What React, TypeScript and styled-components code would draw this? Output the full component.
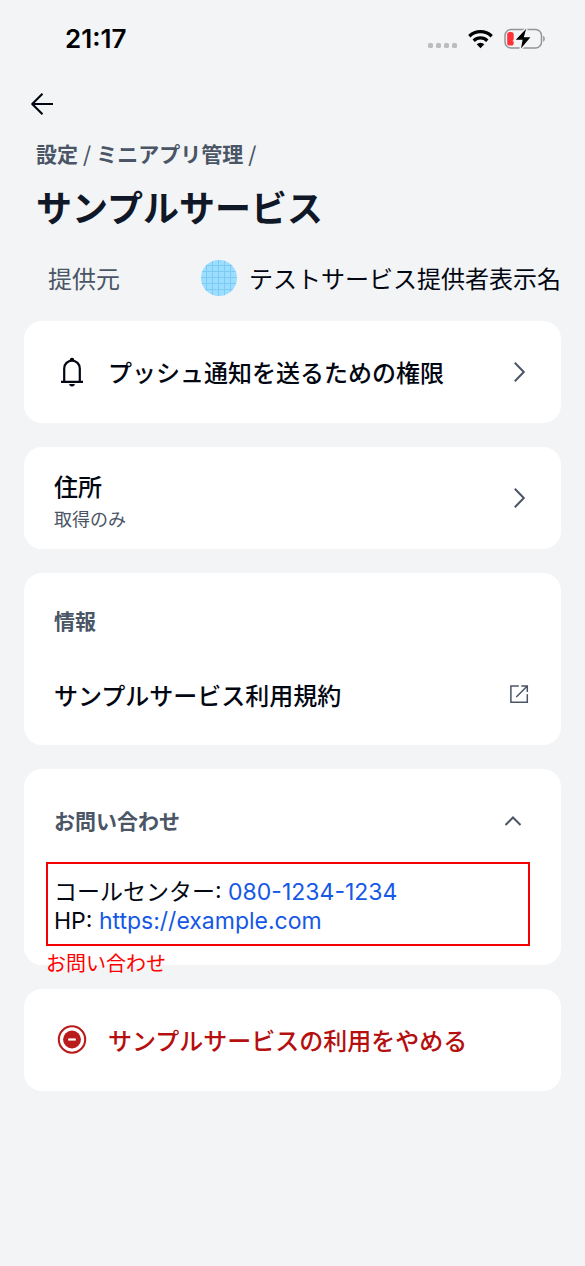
import React, { useState } from "react";
import styled, { createGlobalStyle } from "styled-components";

const ink = "#030712";
const muted = "#4a5565";
const danger = "#b91c1c";
const dangerText = "#b50f0f";
const latinFirst = `Inter, "Noto Sans CJK JP", sans-serif`;

const GlobalStyle = createGlobalStyle`
  * { box-sizing: border-box; }
  body {
    margin: 0;
    background: #f3f4f6;
    color: ${ink};
    font-family: "Noto Sans CJK JP", sans-serif;
    font-size: 24px;
    line-height: 36px;
  }
  h1, h2, p, dl, dd { margin: 0; }
  button { font: inherit; color: inherit; background: none; border: 0; padding: 0; cursor: pointer; text-align: left; }
  a { text-decoration: none; color: inherit; }
  svg { display: block; flex: none; }
`;

const Page = styled.div`
  min-height: 100vh;
  padding-bottom: 40px;
`;

const StatusBar = styled.div`
  display: flex;
  align-items: center;
  justify-content: space-between;
  height: 78px;
  padding: 0 39px 0 65px;
  color: #000;
`;

const Clock = styled.time`
  font-family: ${latinFirst};
  font-size: 26px;
  font-weight: 600;
`;

const StatusIcons = styled.div`
  display: flex;
  align-items: center;
  gap: 11px;
`;

const NavBar = styled.nav`
  display: flex;
  align-items: center;
  height: 52px;
  padding: 0 24px;
`;

const BackButton = styled.button`
  width: 36px;
  height: 36px;
`;

const Header = styled.header`
  padding: 8px 36px 0;
`;

const Breadcrumb = styled.nav`
  display: flex;
  gap: 5px;
  font-size: 21px;
  font-weight: 700;
  line-height: 30px;
  color: ${muted};
`;

const Slash = styled.span`
  font-weight: 500;
`;

const Title = styled.h1`
  margin-top: 14px;
  font-size: 36px;
  font-weight: 700;
  line-height: 48px;
  color: #101828;
`;

const Provider = styled.dl`
  display: flex;
  align-items: center;
  justify-content: space-between;
  padding: 30px 24px 25px 48px;
  white-space: nowrap;
`;

const ProviderLabel = styled.dt`
  color: ${muted};
`;

const ProviderName = styled.dd`
  display: flex;
  align-items: center;
  gap: 12px;
`;

const Cards = styled.main`
  display: flex;
  flex-direction: column;
  gap: 24px;
  padding: 0 24px;
`;

const Card = styled.section<{ $top?: number; $bottom?: number; $gap?: number }>`
  position: relative;
  display: flex;
  flex-direction: column;
  gap: ${(p) => p.$gap ?? 0}px;
  padding: ${(p) => p.$top ?? 0}px 24px ${(p) => p.$bottom ?? 0}px 30px;
  border-radius: 18px;
  background: #fff;
`;

const CardButton = styled.button<{ $danger?: boolean }>`
  display: flex;
  align-items: center;
  gap: 18px;
  min-height: 102px;
  padding: 0 24px 0 30px;
  border-radius: 18px;
  background: #fff;
  font-weight: 500;
  color: ${(p) => (p.$danger ? dangerText : ink)};
`;

const Grow = styled.span`
  flex: 1;
`;

const Stacked = styled(Grow)`
  padding-top: 4px;
`;

const Note = styled.small`
  display: block;
  font-size: 18px;
  font-weight: 400;
  line-height: 28px;
  color: ${muted};
`;

const Heading = styled.h2`
  font-size: 21px;
  font-weight: 700;
  line-height: 30px;
  color: ${muted};
`;

const RowLink = styled.a`
  display: flex;
  align-items: center;
  justify-content: space-between;
  font-weight: 500;
`;

const Toggle = styled.button`
  display: flex;
  align-items: center;
  justify-content: space-between;
  width: 100%;
  padding-right: 6px;
`;

const ContactLines = styled.div`
  font-family: ${latinFirst};
  font-size: 23px;
  line-height: 29px;
`;

const ContactLink = styled.a`
  color: #1558e6;
`;

const Callout = styled.div`
  position: absolute;
  top: 93px;
  left: 22px;
  right: 31px;
  height: 84px;
  border: 2px solid #f40000;
  pointer-events: none;
`;

const CalloutLabel = styled.span`
  position: absolute;
  top: 84px;
  left: -2px;
  font-size: 20px;
  line-height: 30px;
  color: #ff0000;
`;

const SignalIcon = () => (
  <svg width="30" height="26" viewBox="0 0 30 26" fill="#bcbdc0">
    {[1, 9, 17, 25].map((x) => (
      <rect key={x} x={x} y="17" width="5" height="5" rx="1.5" />
    ))}
  </svg>
);

const WifiIcon = () => (
  <svg width="25" height="20" viewBox="0 0 25 20" fill="none" stroke="#000" strokeWidth="3.3">
    <path d="M1.3 7.2a16 16 0 0 1 22.4 0" />
    <path d="M5.7 11.7a9.8 9.8 0 0 1 13.6 0" />
    <path d="M12.5 19.2 8.7 15.3a5.4 5.4 0 0 1 7.6 0Z" fill="#000" stroke="none" />
  </svg>
);

const BatteryIcon = () => (
  <svg width="42" height="22" viewBox="0 0 42 22">
    <rect x="1" y="1.5" width="36.5" height="18.5" rx="6" fill="none" stroke="#939496" strokeWidth="1.5" />
    <path d="M39.2 7.8c2.1 1 2.1 5 0 6Z" fill="#939496" />
    <rect x="3.2" y="4" width="6.5" height="13.5" rx="2.6" fill="#ff3238" />
    <path d="M22.2.8 11.8 11.8h6.8L17 20.6 26.4 9.2h-6.6Z" fill="#000" stroke="#f3f4f6" strokeWidth="3" paintOrder="stroke" />
  </svg>
);

const ArrowLeftIcon = () => (
  <svg width="36" height="36" viewBox="0 0 36 36" fill="none" stroke={ink} strokeWidth="2.1" strokeLinejoin="round">
    <path d="M29 18H8M18.5 7.7 8.2 18l10.3 10.3" />
  </svg>
);

const GlobeAvatar = () => (
  <svg width="36" height="36" viewBox="0 0 36 36">
    <defs>
      <clipPath id="disc">
        <circle cx="18" cy="18" r="18" />
      </clipPath>
    </defs>
    <g clipPath="url(#disc)">
      <rect width="36" height="36" fill="#9bdeff" />
      <path
        d="M5.5 0v36M11.5 0v36M17.5 0v36M23.5 0v36M29.5 0v36M0 5.5h36M0 11.5h36M0 17.5h36M0 23.5h36M0 29.5h36"
        stroke="#7dcbf5"
      />
    </g>
  </svg>
);

const BellIcon = () => (
  <svg width="36" height="36" viewBox="0 0 36 36" fill="none" stroke={ink} strokeWidth="2.2">
    <path d="M7 27.9h22M10.2 27.9V14.4a7.8 7.8 0 0 1 15.6 0v13.5" />
    <path d="M15.7 6.8V6a2.3 2.3 0 0 1 4.6 0v.8ZM15.2 30h5.6a2.8 2.4 0 0 1-5.6 0Z" fill={ink} stroke="none" />
  </svg>
);

const ChevronRightIcon = () => (
  <svg width="36" height="36" viewBox="0 0 36 36" fill="none" stroke={muted} strokeWidth="2">
    <path d="m13.8 8.8 9 9.2-9 9.2" />
  </svg>
);

const ChevronUpIcon = ({ open }: { open: boolean }) => (
  <svg width="36" height="30" viewBox="0 0 36 30" fill="none" stroke={muted} strokeWidth="2">
    <path d={open ? "m10.5 20 7.5-7.5 7.5 7.5" : "m10.5 12 7.5 7.5 7.5-7.5"} />
  </svg>
);

const ExternalIcon = () => (
  <svg width="36" height="36" viewBox="0 0 36 36" fill="none" stroke={muted} strokeWidth="1.5">
    <path d="M17.8 9H9.9v16.2h16.4v-8" />
    <path d="M20.3 9h6v6M26.3 9 15.3 20" />
  </svg>
);

const StopIcon = () => (
  <svg width="36" height="36" viewBox="0 0 36 36">
    <circle cx="18" cy="17.5" r="13.2" fill="none" stroke={danger} strokeWidth="2.1" />
    <circle cx="18" cy="17.5" r="8.9" fill={danger} />
    <path d="M14.2 17.5h7.6" stroke="#fff" strokeWidth="2.2" />
  </svg>
);

export default function App() {
  const [open, setOpen] = useState(true);
  return (
    <Page lang="ja">
      <GlobalStyle />
      <StatusBar>
        <Clock>21:17</Clock>
        <StatusIcons>
          <SignalIcon />
          <WifiIcon />
          <BatteryIcon />
        </StatusIcons>
      </StatusBar>
      <NavBar>
        <BackButton aria-label="戻る">
          <ArrowLeftIcon />
        </BackButton>
      </NavBar>
      <Header>
        <Breadcrumb>
          <a href="#settings">設定</a>
          <Slash>/</Slash>
          <a href="#mini-apps">ミニアプリ管理</a>
          <Slash>/</Slash>
        </Breadcrumb>
        <Title>サンプルサービス</Title>
      </Header>
      <Provider>
        <ProviderLabel>提供元</ProviderLabel>
        <ProviderName>
          <GlobeAvatar />
          テストサービス提供者表示名
        </ProviderName>
      </Provider>
      <Cards>
        <CardButton>
          <BellIcon />
          <Grow>プッシュ通知を送るための権限</Grow>
          <ChevronRightIcon />
        </CardButton>
        <CardButton>
          <Stacked>
            住所
            <Note>取得のみ</Note>
          </Stacked>
          <ChevronRightIcon />
        </CardButton>
        <Card $top={32} $bottom={32} $gap={42}>
          <Heading>情報</Heading>
          <RowLink href="#terms">
            サンプルサービス利用規約
            <ExternalIcon />
          </RowLink>
        </Card>
        <Card $top={36} $bottom={29} $gap={43}>
          <Heading>
            <Toggle aria-expanded={open} onClick={() => setOpen(!open)}>
              お問い合わせ
              <ChevronUpIcon open={open} />
            </Toggle>
          </Heading>
          {open && (
            <>
              <ContactLines>
                <p>
                  コールセンター: <ContactLink href="tel:080-1234-1234">080-1234-1234</ContactLink>
                </p>
                <p>
                  HP: <ContactLink href="https://example.com">https://example.com</ContactLink>
                </p>
              </ContactLines>
              <Callout>
                <CalloutLabel>お問い合わせ</CalloutLabel>
              </Callout>
            </>
          )}
        </Card>
        <CardButton $danger>
          <StopIcon />
          <Grow>サンプルサービスの利用をやめる</Grow>
        </CardButton>
      </Cards>
    </Page>
  );
}
